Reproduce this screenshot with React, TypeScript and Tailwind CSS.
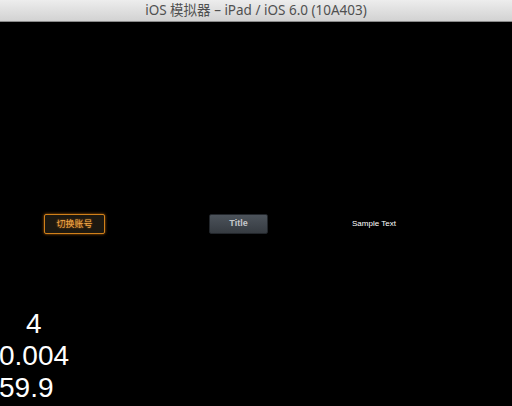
import React from 'react'

const sans = { fontFamily: '"Liberation Sans", Arial, sans-serif' }

export default function App() {
  return (
    <div className="w-[512px] h-[406px] bg-black overflow-hidden flex flex-col" style={sans}>
      {/* Window title bar */}
      <div className="h-[22px] shrink-0 flex items-center justify-center bg-gradient-to-b from-[#ededed] to-[#d2d2d2] border-b border-[#8a8a8a]">
        <span
          className="text-[13.5px] text-[#505050] leading-none"
          style={{ fontFamily: '"Lucida Grande", "Noto Sans", "Noto Sans CJK SC", sans-serif' }}
        >
          iOS 模拟器 – iPad / iOS 6.0 (10A403)
        </span>
      </div>

      {/* Simulator screen */}
      <div className="flex-1 flex flex-col">
        <div className="pt-[192px] flex items-center h-[212px]">
          <button
            className="ml-[44px] w-[61px] h-[20px] flex items-center justify-center rounded-[2px] border border-[#d0801a] bg-[#1c1810] text-[9px] text-[#f2a84a] shadow-[0_0_3px_#b0600a]"
            style={{ fontFamily: '"Noto Sans CJK SC", sans-serif', textShadow: '0 0 2px #c06a10' }}
          >
            切换账号
          </button>
          <button className="ml-[104px] w-[59px] h-[20px] flex items-center justify-center rounded-[2px] border border-[#22262b] bg-gradient-to-b from-[#4c535b] to-[#363b41] text-[9px] font-semibold text-[#c4c8cc]">
            Title
          </button>
          <span className="ml-[84px] text-[8px] text-white">Sample Text</span>
        </div>

        {/* Stats labels */}
        <div className="mt-auto pb-[2px] text-[28px] leading-[32px] text-white">
          <div className="pl-[26px]">4</div>
          <div className="-ml-[1px]">0.004</div>
          <div className="-ml-[1px]">59.9</div>
        </div>
      </div>
    </div>
  )
}
